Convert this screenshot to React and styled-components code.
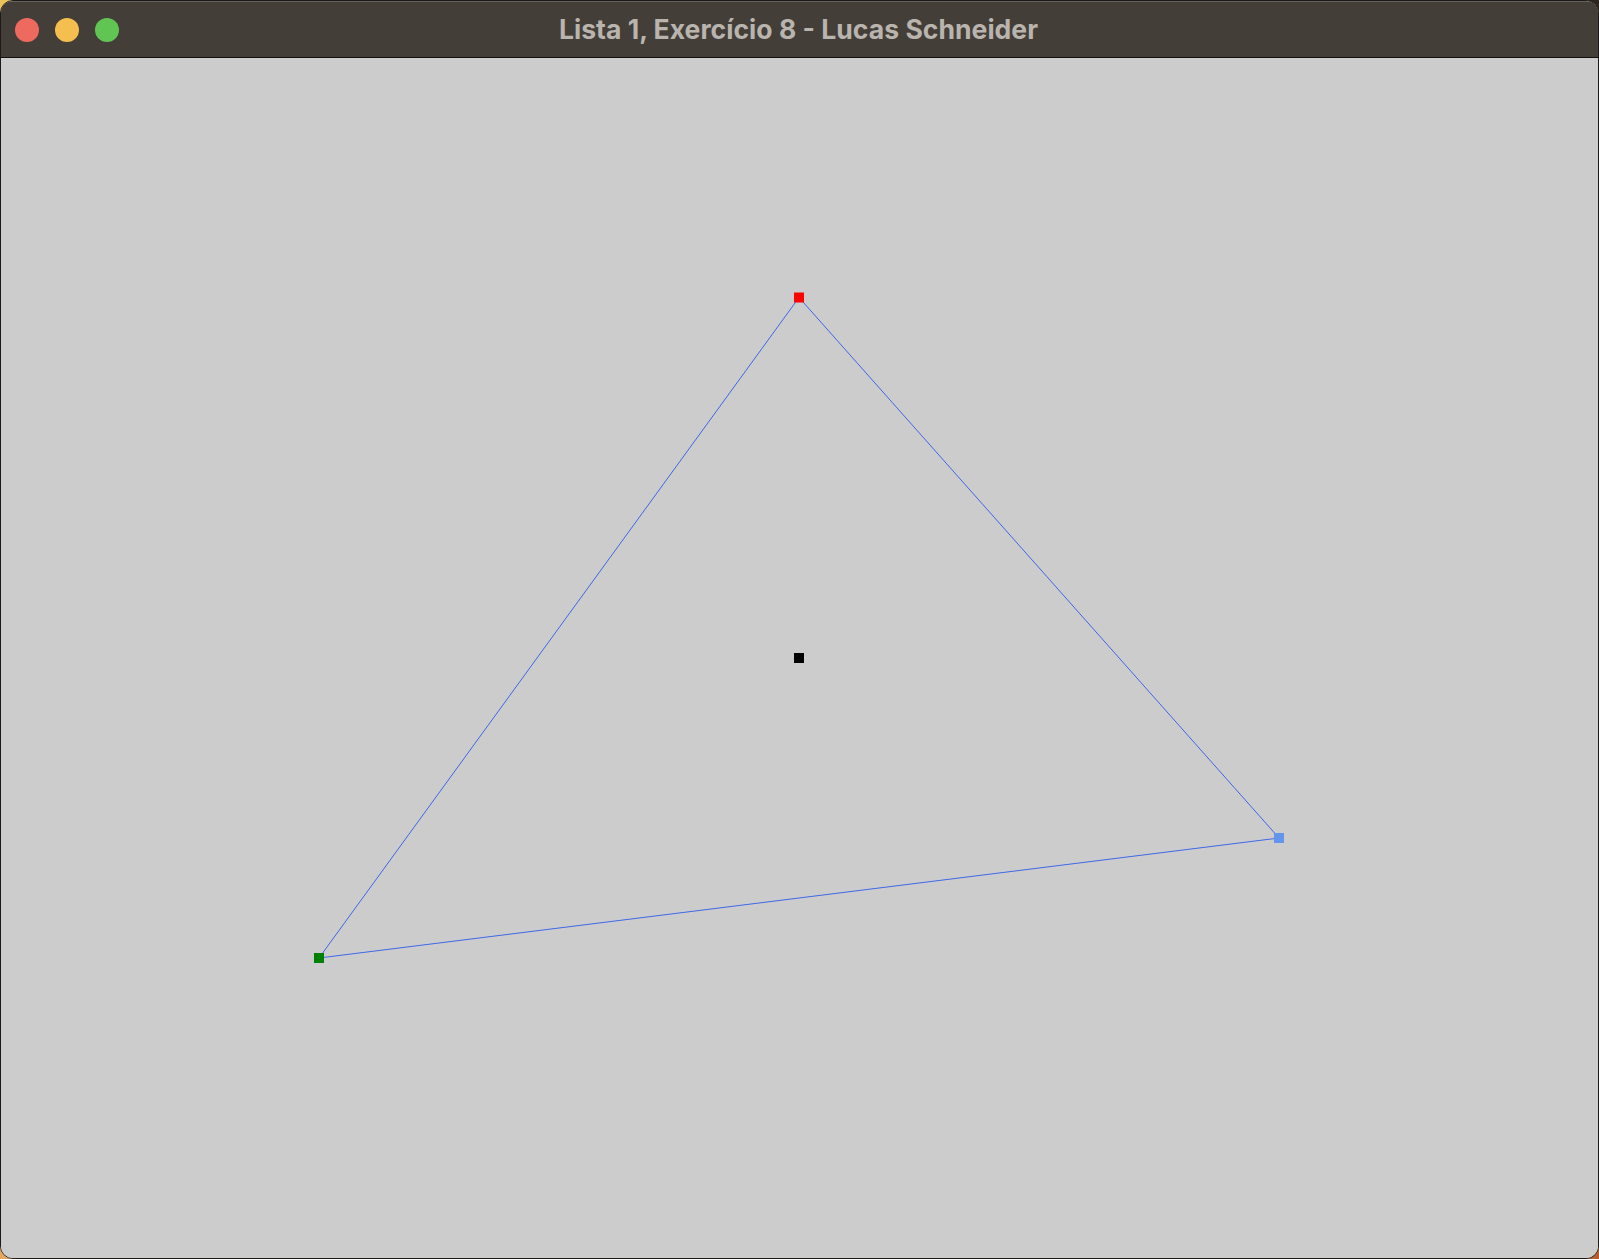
import React from 'react';
import styled, { createGlobalStyle } from 'styled-components';

const GlobalStyle = createGlobalStyle`
  html, body {
    margin: 0;
    padding: 0;
    width: 1599px;
    height: 1259px;
    overflow: hidden;
    background: linear-gradient(135deg, #e8c45a 0%, #e3a762 45%, #2a241f 55%, #b4602e 100%);
  }
  #root {
    width: 100%;
    height: 100%;
  }
`;

const Window = styled.div`
  box-sizing: border-box;
  width: 1599px;
  height: 1259px;
  display: flex;
  flex-direction: column;
  border-radius: 13px;
  overflow: hidden;
  border: 1px solid #1c1a18;
  box-shadow: inset 0 1px 0 rgba(255, 255, 255, 0.22);
  background: #cccccc;
`;

const TitleBar = styled.div`
  position: relative;
  flex: 0 0 56px;
  display: flex;
  align-items: center;
  justify-content: center;
  background: #433e38;
  border-bottom: 1px solid #141210;
  box-shadow: inset 0 1px 0 rgba(255, 255, 255, 0.18);
`;

const Lights = styled.div`
  position: absolute;
  left: 14px;
  top: 17px;
  display: flex;
  gap: 16px;
`;

const Light = styled.span`
  width: 24px;
  height: 24px;
  border-radius: 50%;
  background: ${p => p.$color};
`;

const Title = styled.h1`
  margin: 0;
  margin-right: 2px;
  font-family: Inter, "Liberation Sans", sans-serif;
  font-weight: 700;
  font-size: 26.6px;
  letter-spacing: 0;
  color: #b9b4ae;
`;

const Canvas = styled.div`
  flex: 1;
  position: relative;
  background: #cccccc;
`;

const Drawing = styled.svg`
  display: block;
  width: 100%;
  height: 100%;
`;

const vertices = [
  { x: 798, y: 239.5, color: '#ff0000' },
  { x: 1278, y: 780, color: '#6495ed' },
  { x: 318, y: 900, color: '#008000' },
];

const centroid = { x: 798, y: 600 };

const Point = ({ x, y, color }) => (
  <rect x={x - 5} y={y - 5} width={10} height={10} fill={color} />
);

export default function App() {
  const path = vertices.map(v => `${v.x},${v.y}`).join(' ');
  return (
    <>
      <GlobalStyle />
      <Window>
        <TitleBar>
          <Lights>
            <Light $color="#ee6a5f" />
            <Light $color="#f5bf4f" />
            <Light $color="#61c554" />
          </Lights>
          <Title>Lista 1, Exercício 8 - Lucas Schneider</Title>
        </TitleBar>
        <Canvas>
          <Drawing>
            <polygon points={path} fill="none" stroke="#3f67e6" strokeWidth="1" />
            {vertices.map((v, i) => (
              <Point key={i} {...v} />
            ))}
            <Point x={centroid.x} y={centroid.y} color="#000000" />
          </Drawing>
        </Canvas>
      </Window>
    </>
  );
}
